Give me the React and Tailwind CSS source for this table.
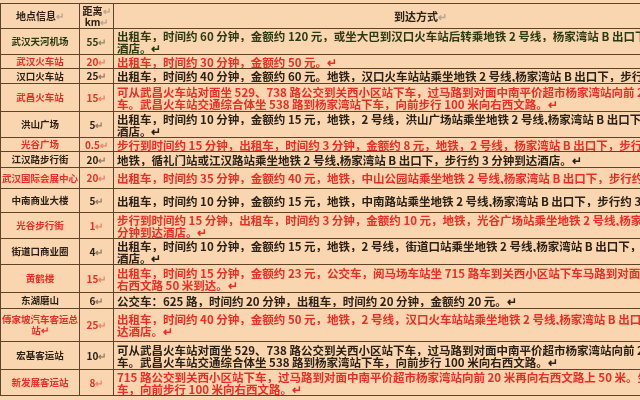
import React from 'react';

// 到达方式一览表 — rows: [name, km, lines of route text, red?, row height class, name lines]
const ROWS = [
  { name: ['武汉天河机场'], km: '55', red: false, tone: 'text-[#2c3a12]', h: 'h-[26px]', lines: ['出租车，时间约 60 分钟，金额约 120 元，或坐大巴到汉口火车站后转乘地铁 2 号线，杨家湾站 B 出口下，步行约 3 分钟到达', '酒店。↵'] },
  { name: ['武汉火车站'], km: '20', red: true, h: 'h-[14px]', lines: ['出租车，时间约 30 分钟，金额约 50 元。↵'] },
  { name: ['汉口火车站'], km: '25', red: false, h: 'h-[15px]', lines: ['出租车，时间约 40 分钟，金额约 60 元。地铁，汉口火车站站乘坐地铁 2 号线,杨家湾站 B 出口下，步行约 3 分钟到达酒店。↵'] },
  { name: ['武昌火车站'], km: '15', red: true, h: 'h-[28px]', lines: ['可从武昌火车站对面坐 529、738 路公交到关西小区站下车，过马路到对面中南平价超市杨家湾站向前 20 米再向右转', '车。武昌火车站交通综合体坐 538 路到杨家湾站下车，向前步行 100 米向右西文路。↵'] },
  { name: ['洪山广场'], km: '5', red: false, h: 'h-[26px]', lines: ['出租车，时间约 10 分钟，金额约 15 元，地铁，2 号线，洪山广场站乘坐地铁 2 号线,杨家湾站 B 出口下，步行约 3 分钟到达', '酒店。↵'] },
  { name: ['光谷广场'], km: '0.5', red: true, h: 'h-[14px]', lines: ['步行到时间约 15 分钟，出租车，时间约 3 分钟，金额约 8 元，地铁，2 号线，杨家湾站 B 出口下，步行约 3 分钟到达酒店。↵'] },
  { name: ['江汉路步行街'], km: '20', red: false, h: 'h-[16px]', lines: ['地铁，循礼门站或江汉路站乘坐地铁 2 号线,杨家湾站 B 出口下，步行约 3 分钟到达酒店。↵'] },
  { name: ['武汉国际会展中心'], km: '20', red: true, h: 'h-[21px]', lines: ['出租车，时间约 35 分钟，金额约 40 元，地铁，中山公园站乘坐地铁 2 号线,杨家湾站 B 出口下，步行约 3 分钟到达酒店。↵'] },
  { name: ['中南商业大楼'], km: '5', red: false, h: 'h-[24px]', lines: ['出租车，时间约 10 分钟，金额约 15 元，地铁，中南路站乘坐地铁 2 号线,杨家湾站 B 出口下，步行约 3 分钟到达酒店。↵'] },
  { name: ['光谷步行街'], km: '1', red: true, h: 'h-[26px]', lines: ['步行到时间约 15 分钟，出租车，时间约 3 分钟，金额约 10 元，地铁，光谷广场站乘坐地铁 2 号线,杨家湾站 B 出口下，步行约 3', '分钟到达酒店。↵'] },
  { name: ['街道口商业圈'], km: '4', red: false, h: 'h-[26px]', lines: ['出租车，时间约 10 分钟，金额约 15 元，地铁，2 号线，街道口站乘坐地铁 2 号线,杨家湾站 B 出口下，步行约 3 分钟到达', '酒店。↵'] },
  { name: ['黄鹤楼'], km: '15', red: true, h: 'h-[28px]', lines: ['出租车，时间约 15 分钟，金额约 23 元，公交车，阅马场车站坐 715 路车到关西小区站下车马路到对面中南平价超市杨家湾站向前 20 米', '右西文路 50 米到达。↵'] },
  { name: ['东湖磨山'], km: '6', red: false, h: 'h-[16px]', lines: ['公交车：625 路，时间约 20 分钟，出租车，时间约 20 分钟，金额约 20 元。↵'] },
  { name: ['傅家坡汽车客运总', '站↵'], km: '25', red: true, h: 'h-[33px]', lines: ['出租车，时间约 40 分钟，金额约 50 元，地铁，2 号线，汉口火车站站乘坐地铁 2 号线,杨家湾站 B 出口下，步行约 3 分钟到', '达酒店。↵'] },
  { name: ['宏基客运站'], km: '10', red: false, h: 'h-[28px]', lines: ['可从武昌火车站对面坐 529、738 路公交到关西小区站下车，过马路到对面中南平价超市杨家湾站向前 20 米再向右', '车。武昌火车站交通综合体坐 538 路到杨家湾站下车，向前步行 100 米向右西文路。↵'] },
  { name: ['新发展客运站'], km: '8', red: true, h: 'h-[26px]', lines: ['715 路公交到关西小区站下车，过马路到对面中南平价超市杨家湾站向前 20 米再向右西文路上 50 米。坐 538 路到', '车，向前步行 100 米向右西文路。↵'] },
];

const cell = 'border border-[#5e4329] align-middle p-0';

export default function App() {
  return (
    <div
      className="w-[640px] h-[400px] overflow-hidden bg-[#f9d5b0] pt-[3px]"
      style={{ fontFamily: '"Noto Sans CJK SC", "Liberation Serif", serif' }}
    >
      <table className="table-fixed border-collapse w-[740px] font-bold leading-[12px] blur-[0.4px]">
        <colgroup>
          <col className="w-[79px]" />
          <col className="w-[34px]" />
          <col className="w-[627px]" />
        </colgroup>
        <thead>
          <tr className="h-[25px] text-[#2b2116] text-[10px]">
            <th className={`${cell} text-center font-bold`}>地点信息<span className="text-[#b9a591]">↵</span></th>
            <th className={`${cell} text-center font-bold leading-[11px]`}>
              <div>距离<span className="text-[#b9a591]">↵</span></div>
              <div>km<span className="text-[#b9a591]">↵</span></div>
            </th>
            <th className={`${cell} text-left pl-[280px] font-bold text-[11px]`}>到达方式<span className="text-[#b9a591]">↵</span></th>
          </tr>
        </thead>
        <tbody>
          {ROWS.map((r, i) => {
            const color = r.red ? 'text-[#ee2d24]' : (r.tone || 'text-[#2b2116]');
            return (
              <tr key={i} className={`${r.h} ${color}`}>
                <td className={`${cell} text-center text-[9.5px] leading-[11px]`}>
                  {r.name.map((n, j) => (
                    <div key={j} className="whitespace-nowrap overflow-hidden">{n}</div>
                  ))}
                </td>
                <td className={`${cell} text-center text-[10px]`}>
                  {r.km}<span className="opacity-50">↵</span>
                </td>
                <td className={`${cell} pl-[3px] text-[11.5px]`}>
                  {r.lines.map((l, j) => (
                    <div key={j} className="whitespace-nowrap overflow-hidden">{l}</div>
                  ))}
                </td>
              </tr>
            );
          })}
        </tbody>
      </table>
    </div>
  );
}
